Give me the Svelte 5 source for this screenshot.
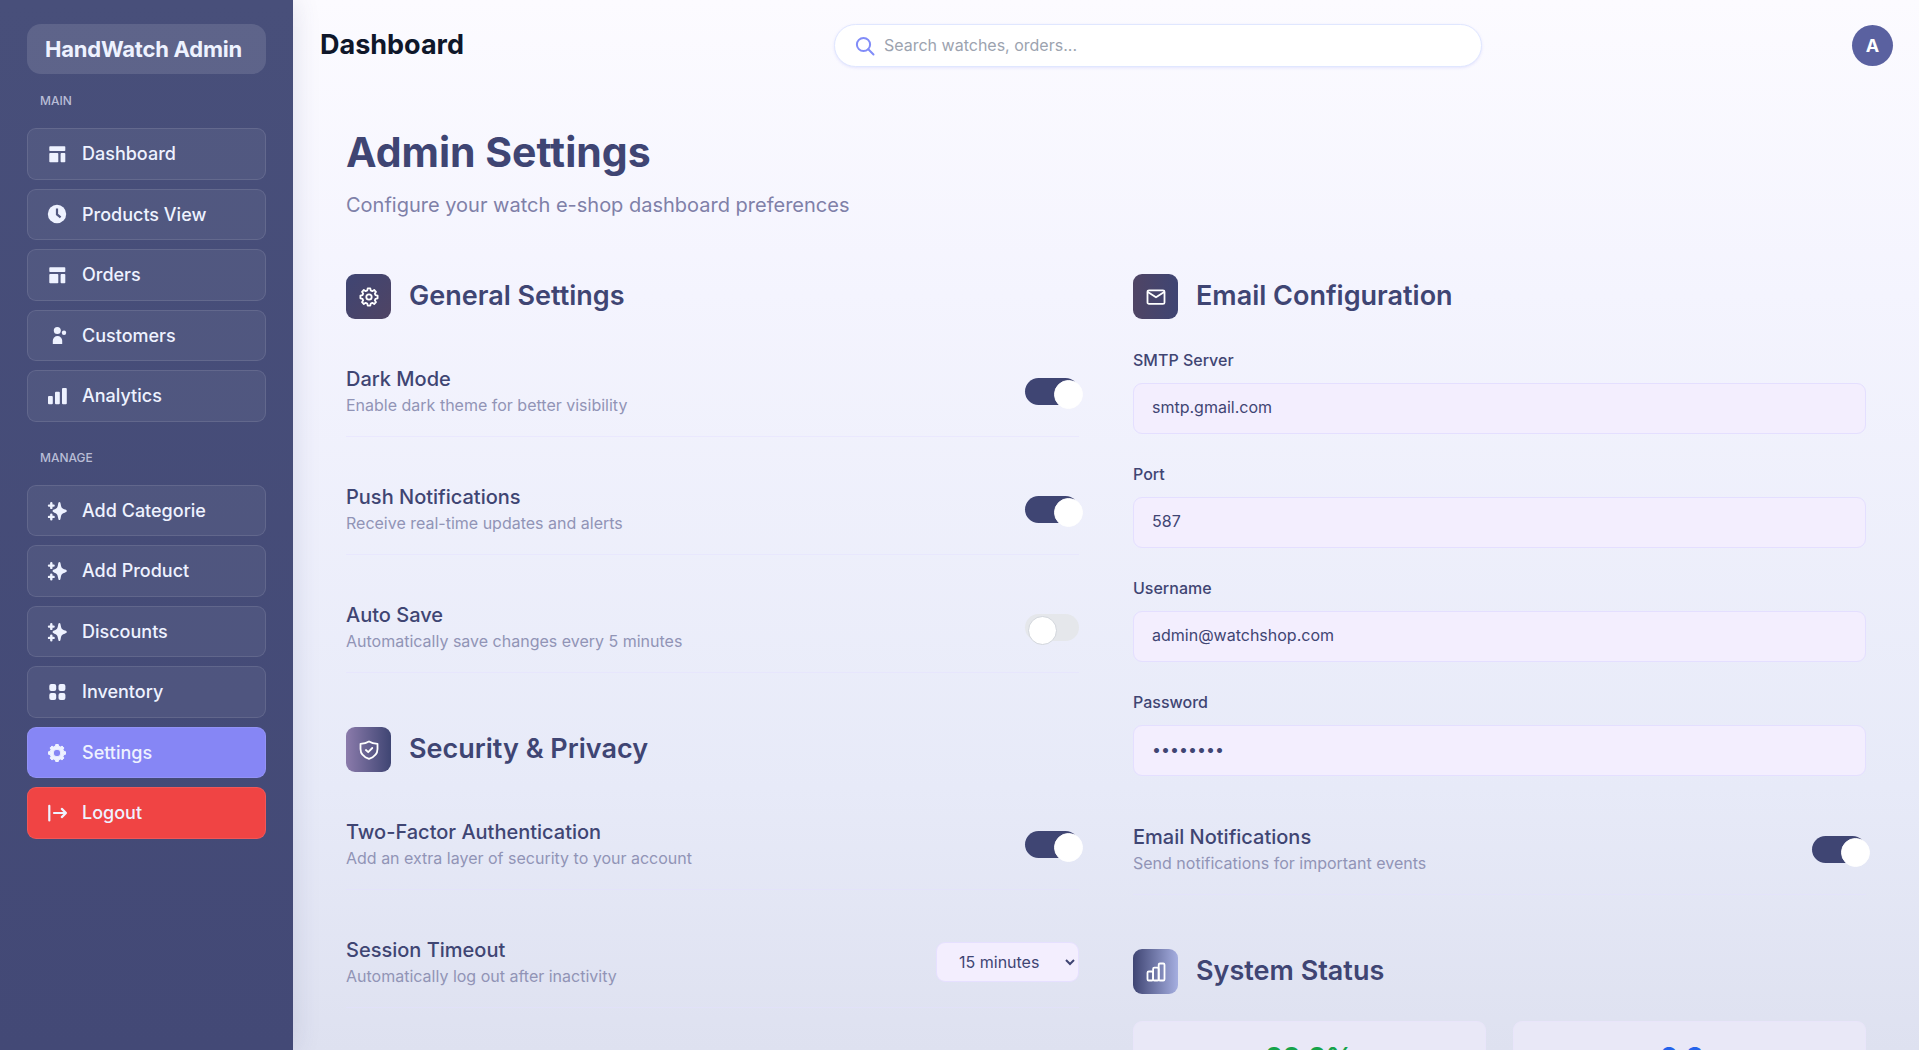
<script>
  const groups = [
    {
      title: 'MAIN',
      items: [
        { label: 'Dashboard', icon: 'layout' },
        { label: 'Products View', icon: 'clock' },
        { label: 'Orders', icon: 'layout' },
        { label: 'Customers', icon: 'person' },
        { label: 'Analytics', icon: 'bars' }
      ]
    },
    {
      title: 'MANAGE',
      items: [
        { label: 'Add Categorie', icon: 'sparkle' },
        { label: 'Add Product', icon: 'sparkle' },
        { label: 'Discounts', icon: 'sparkle' },
        { label: 'Inventory', icon: 'grid' },
        { label: 'Settings', icon: 'gear', tone: 'active' },
        { label: 'Logout', icon: 'exit', tone: 'danger' }
      ]
    }
  ];

  let general = $state([
    { id: 'dark', title: 'Dark Mode', text: 'Enable dark theme for better visibility', on: true },
    { id: 'push', title: 'Push Notifications', text: 'Receive real-time updates and alerts', on: true },
    { id: 'autosave', title: 'Auto Save', text: 'Automatically save changes every 5 minutes', on: false }
  ]);
  let security = $state([
    { id: 'twofactor', title: 'Two-Factor Authentication', text: 'Add an extra layer of security to your account', on: true }
  ]);
  let email = $state([
    { id: 'mailnotes', title: 'Email Notifications', text: 'Send notifications for important events', on: true }
  ]);

  const fields = [
    { id: 'smtp', label: 'SMTP Server', type: 'text', value: 'smtp.gmail.com' },
    { id: 'port', label: 'Port', type: 'text', value: '587' },
    { id: 'user', label: 'Username', type: 'text', value: 'admin@watchshop.com' },
    { id: 'pass', label: 'Password', type: 'password', value: 'password' }
  ];

  const stats = [
    { value: '99.9%', label: 'Uptime', tone: 'green' },
    { value: '2.3s', label: 'Response Time', tone: 'blue' }
  ];

  // Closed scalloped outline used by both gear icons.
  function gear(c, outer, inner) {
    const pts = [];
    for (let i = 0; i < 8; i++) {
      const a = (i * Math.PI) / 4;
      for (const [d, r] of [[-0.27, inner], [-0.15, outer], [0.15, outer], [0.27, inner]]) {
        pts.push(`${(c + r * Math.sin(a + d)).toFixed(2)} ${(c - r * Math.cos(a + d)).toFixed(2)}`);
      }
    }
    return `M${pts.join('L')}Z`;
  }
</script>

{#snippet switchRow(row)}
  <div class="row">
    <div class="row-info">
      <label class="row-title" for={row.id}>{row.title}</label>
      <p class="row-text">{row.text}</p>
    </div>
    <input class="switch" type="checkbox" role="switch" id={row.id} bind:checked={row.on} />
  </div>
{/snippet}

<div class="app">
  <aside class="sidebar">
    <div class="brand">HandWatch Admin</div>
    {#each groups as group}
      <nav class="group" aria-label={group.title}>
        <h2 class="group-title">{group.title}</h2>
        {#each group.items as item}
          <a class="item {item.tone ?? ''}" href="#{item.icon}">
            <svg class="nav-icon" viewBox="0 0 22 22" fill="currentColor" aria-hidden="true">
              {#if item.icon === 'layout'}
                <rect x="3.3" y="3.2" width="16" height="4.8" rx="0.8" />
                <rect x="3.3" y="10.1" width="9" height="9.2" rx="0.8" />
                <rect x="14.6" y="10.1" width="4.7" height="9.2" rx="0.8" />
              {:else if item.icon === 'clock'}
                <circle cx="11" cy="11" r="9.2" />
                <path class="cut" d="M11 5.6v5.8l3.6 3" />
              {:else if item.icon === 'person'}
                <circle cx="11.3" cy="6.5" r="3.5" />
                <circle cx="18" cy="8.7" r="2.2" />
                <path d="M6.8 20v-3.2a4.7 4.7 0 0 1 9.4 0V20Z" />
              {:else if item.icon === 'bars'}
                <rect x="2" y="11" width="4.8" height="8.3" rx="1" />
                <rect x="9" y="6.7" width="4.8" height="12.6" rx="1" />
                <rect x="16" y="3" width="4.8" height="16.3" rx="1" />
              {:else if item.icon === 'sparkle'}
                <path d="M13.4 2c.9 0 1 .7 1.3 2.3.7 3.7 1.2 4.2 4.5 5.3 1.2.4 1.6.8 1.6 1.4s-.4 1-1.6 1.4c-3.3 1.1-3.8 1.6-4.5 5.3-.3 1.6-.4 2.3-1.3 2.3s-1-.7-1.3-2.3c-.7-3.7-1.2-4.2-4.1-5.3-1-.4-1.4-.8-1.4-1.4s.4-1 1.4-1.4c2.9-1.1 3.4-1.6 4.1-5.3.3-1.6.4-2.3 1.3-2.3Z" />
                <path class="plus" d="M5.3 3.3v4.600M3 5.6h4.6M5.3 14.6v4.6M3 16.9h4.6" />
              {:else if item.icon === 'grid'}
                <rect x="3.3" y="3" width="6.9" height="6.9" rx="2" />
                <rect x="12.5" y="3" width="6.9" height="6.9" rx="2" />
                <rect x="3.3" y="12" width="6.9" height="6.9" rx="2" />
                <rect x="12.5" y="12" width="6.9" height="6.9" rx="2" />
              {:else if item.icon === 'gear'}
                <path class="soft" fill-rule="evenodd" d="{gear(11, 8.6, 6.9)}M11 7.2a3.8 3.8 0 1 0 0 7.6a3.8 3.8 0 0 0 0-7.6Z" />
              {:else}
                <path class="line" d="M3.3 3.8v14.6M8 11h12M15.8 6.9 20 11l-4.2 4.1" />
              {/if}
            </svg>
            {item.label}
          </a>
        {/each}
      </nav>
    {/each}
  </aside>

  <div class="main">
    <header class="topbar">
      <div class="topbar-title">Dashboard</div>
      <label class="search">
        <svg class="search-icon" viewBox="0 0 20 20" aria-hidden="true">
          <circle cx="8.5" cy="8.5" r="6.6" />
          <path d="m13.3 13.3 5.2 5.2" />
        </svg>
        <input type="search" placeholder="Search watches, orders..." aria-label="Search" />
      </label>
      <button class="avatar" type="button" aria-label="Account">A</button>
    </header>

    <main class="content">
      <h1>Admin Settings</h1>
      <p class="lead">Configure your watch e-shop dashboard preferences</p>

      <div class="columns">
        <div class="column">
          <section>
            <div class="head">
              <span class="badge general">
                <svg viewBox="0 0 22 22" aria-hidden="true">
                  <path d={gear(11, 8.7, 6.7)} />
                  <circle cx="11" cy="11" r="2.7" />
                </svg>
              </span>
              <h2>General Settings</h2>
            </div>
            {#each general as row}{@render switchRow(row)}{/each}
          </section>

          <section>
            <div class="head">
              <span class="badge security">
                <svg viewBox="0 0 22 22" aria-hidden="true">
                  <path d="M11 2.4c2.5 1.7 5.2 2.3 8.5 2.4v5.2c0 4.700-3.3 8.1-8.5 9.8C5.8 18.1 2.5 14.7 2.5 10V4.8C5.8 4.7 8.5 4.1 11 2.4Z" />
                  <path d="m7.9 11 2.3 2.2 4.1-4.2" />
                </svg>
              </span>
              <h2>Security &amp; Privacy</h2>
            </div>
            {#each security as row}{@render switchRow(row)}{/each}
            <div class="row">
              <div class="row-info">
                <label class="row-title" for="timeout">Session Timeout</label>
                <p class="row-text">Automatically log out after inactivity</p>
              </div>
              <select id="timeout">
                <option>15 minutes</option>
                <option>30 minutes</option>
                <option>1 hour</option>
              </select>
            </div>
          </section>
        </div>

        <div class="column">
          <section>
            <div class="head">
              <span class="badge email">
                <svg viewBox="0 0 22 22" aria-hidden="true">
                  <rect x="2.5" y="4.3" width="17" height="13.6" rx="1.5" />
                  <path d="m2.8 6 8.2 5.3L19.2 6" />
                </svg>
              </span>
              <h2>Email Configuration</h2>
            </div>
            <div class="fields">
              {#each fields as field}
                <div class="field">
                  <label for={field.id}>{field.label}</label>
                  <input id={field.id} type={field.type} value={field.value} />
                </div>
              {/each}
            </div>
            {#each email as row}{@render switchRow(row)}{/each}
          </section>

          <section>
            <div class="head">
              <span class="badge status">
                <svg viewBox="0 0 22 22" aria-hidden="true">
                  <rect x="2.5" y="10.5" width="5.6" height="9" rx="1.3" />
                  <rect x="8.1" y="6.7" width="5.6" height="12.8" rx="1.3" />
                  <rect x="13.7" y="2.5" width="5.8" height="17" rx="1.3" />
                </svg>
              </span>
              <h2>System Status</h2>
            </div>
            <div class="stats">
              {#each stats as stat}
                <div class="stat">
                  <strong class={stat.tone}>{stat.value}</strong>
                  <span>{stat.label}</span>
                </div>
              {/each}
            </div>
          </section>
        </div>
      </div>
    </main>
  </div>
</div>

<style>
  :global(body) {
    margin: 0;
  }

  .app {
    display: flex;
    height: 100vh;
    font-family: Inter, 'Liberation Sans', sans-serif;
    color: #3f4573;
    background: linear-gradient(180deg, #fcfbff 0%, #f4f4fe 28%, #e7eaf8 75%, #dee1f0 100%);
  }

  .app * {
    box-sizing: border-box;
  }

  h1,
  h2,
  p {
    margin: 0;
  }

  input,
  select,
  button {
    font-family: inherit;
  }

  .sidebar {
    flex: none;
    display: flex;
    flex-direction: column;
    gap: 9px;
    width: 293px;
    padding: 24px 27px;
    color: #eef2ff;
    background: linear-gradient(180deg, #484f7a, #434976);
    box-shadow: 2px 0 24px rgba(63, 69, 115, 0.13);
  }

  .brand {
    padding: 9px 18px;
    border-radius: 14px;
    font-size: 22px;
    font-weight: 700;
    line-height: 32px;
    letter-spacing: -0.01em;
    background: rgba(255, 255, 255, 0.12);
  }

  .group {
    display: flex;
    flex-direction: column;
    gap: 9px;
  }

  .group + .group {
    margin-top: 9px;
  }

  .group-title {
    padding: 9px 13px;
    font-size: 12px;
    font-weight: 500;
    line-height: 18px;
    color: #b9bdd6;
  }

  .item {
    display: flex;
    align-items: center;
    gap: 14px;
    padding: 12px 18px;
    border: 1px solid rgba(255, 255, 255, 0.1);
    border-radius: 9px;
    font-size: 18px;
    font-weight: 500;
    line-height: 1.42;
    color: #eef2ff;
    text-decoration: none;
    background: rgba(255, 255, 255, 0.06);
  }

  .item.active {
    background: #8686f5;
  }

  .item.danger {
    background: #f04444;
  }

  .nav-icon {
    flex: none;
    width: 22px;
    height: 22px;
  }

  .cut {
    fill: none;
    stroke: #525881;
    stroke-width: 2.2;
  }

  .plus {
    fill: none;
    stroke: currentColor;
    stroke-width: 2.4;
    stroke-linecap: round;
  }

  .soft {
    stroke: currentColor;
    stroke-width: 1;
    stroke-linejoin: round;
  }

  .line {
    fill: none;
    stroke: currentColor;
    stroke-width: 2.2;
    stroke-linecap: round;
    stroke-linejoin: round;
  }

  .main {
    flex: 1;
    min-width: 0;
    overflow-y: auto;
    scrollbar-width: none;
  }

  .topbar {
    display: flex;
    align-items: center;
    justify-content: space-between;
    gap: 24px;
    padding: 24px 26px 24px 27px;
  }

  .topbar-title {
    padding-bottom: 2px;
    font-size: 27px;
    font-weight: 700;
    line-height: 40px;
    color: #0f172a;
  }

  .search {
    flex: 0 1 648px;
    display: flex;
    align-items: center;
    gap: 9px;
    height: 43px;
    padding: 0 20px;
    border: 1px solid #e0e7ff;
    border-radius: 22px;
    background: #fff;
    box-shadow: 0 1px 3px rgba(99, 102, 241, 0.14);
  }

  .search-icon {
    flex: none;
    width: 20px;
    height: 20px;
    fill: none;
    stroke: #818cf8;
    stroke-width: 2;
    stroke-linecap: round;
  }

  .search input {
    flex: 1;
    min-width: 0;
    padding: 0 0 2px;
    border: 0;
    outline: 0;
    font-size: 16px;
    color: #3f4573;
    background: none;
  }

  .search input::placeholder {
    color: #9ca3af;
  }

  .avatar {
    width: 41px;
    height: 41px;
    padding: 0;
    border: 0;
    border-radius: 50%;
    font-size: 18px;
    font-weight: 700;
    color: #fff;
    background: #5a61a0;
  }

  .content {
    padding: 36px 53px 54px;
  }

  h1 {
    font-size: 41px;
    font-weight: 700;
    line-height: 51px;
  }

  .lead {
    margin-top: 12px;
    font-size: 20px;
    line-height: 30px;
    color: #7f80a8;
  }

  .columns {
    display: grid;
    grid-template-columns: 1fr 1fr;
    gap: 54px;
    margin-top: 54px;
  }

  .column {
    display: flex;
    flex-direction: column;
    gap: 54px;
  }

  section {
    display: flex;
    flex-direction: column;
    gap: 27px;
  }

  .head {
    display: flex;
    align-items: center;
    gap: 18px;
  }

  .head h2 {
    padding-bottom: 2px;
    font-size: 27px;
    font-weight: 600;
    line-height: 40px;
  }

  .badge {
    display: grid;
    place-items: center;
    width: 45px;
    height: 45px;
    border-radius: 9px;
  }

  .badge svg {
    width: 22px;
    height: 22px;
    fill: none;
    stroke: #fff;
    stroke-width: 1.8;
    stroke-linecap: round;
    stroke-linejoin: round;
  }

  .general {
    background: linear-gradient(135deg, #3f4573, #4f4464);
  }

  .security {
    background: linear-gradient(90deg, #8b7bab, #3f4573);
  }

  .email {
    background: linear-gradient(90deg, #4f4464, #3f4573);
  }

  .status {
    background: linear-gradient(90deg, #3f4573, #a5aee0);
  }

  .row {
    display: flex;
    align-items: center;
    justify-content: space-between;
    padding: 18px 0;
    border-bottom: 1px solid rgba(228, 224, 255, 0.5);
  }

  .row-info {
    padding-bottom: 3px;
  }

  .row-title {
    display: block;
    font-size: 20px;
    font-weight: 500;
    line-height: 31px;
  }

  .row-text {
    font-size: 16px;
    line-height: 20px;
    color: #9194b6;
  }

  .switch {
    appearance: none;
    position: relative;
    flex: none;
    width: 54px;
    height: 27px;
    margin: 0;
    border-radius: 14px;
    background: #e5e7eb;
  }

  .switch::before {
    content: '';
    position: absolute;
    top: 2px;
    left: 3px;
    width: 27px;
    height: 27px;
    border: 1px solid #d1d5db;
    border-radius: 50%;
    background: #fff;
  }

  .switch:checked {
    background: #3f4573;
  }

  .switch:checked::before {
    left: 29px;
    border-color: #fff;
  }

  select {
    width: 143px;
    height: 40px;
    padding: 0 0 0 18px;
    border: 1px solid #e6e0ff;
    border-radius: 9px;
    font-size: 16px;
    color: #3f4573;
    background: #f3eefe;
  }

  .fields {
    display: grid;
    gap: 26px;
    margin-bottom: 1px;
  }

  .field {
    display: grid;
    gap: 9px;
  }

  .field label {
    font-size: 16px;
    font-weight: 500;
    line-height: 28px;
  }

  .field input {
    width: 100%;
    height: 51px;
    padding: 0 18px 3px;
    border: 1px solid #e4dfff;
    border-radius: 9px;
    font-size: 16px;
    color: #3f4573;
    background: #f3eefe;
  }

  .stats {
    display: grid;
    grid-template-columns: 1fr 1fr;
    gap: 27px;
  }

  .stat {
    display: grid;
    justify-items: center;
    padding: 18px;
    border: 1px solid #e9e5fa;
    border-radius: 9px;
    font-size: 16px;
    line-height: 24px;
    color: #7f80a8;
    background: #e9e8f7;
  }

  .stat strong {
    font-size: 27px;
    line-height: 36px;
  }

  .green {
    color: #16a34a;
  }

  .blue {
    color: #2563eb;
  }
</style>
